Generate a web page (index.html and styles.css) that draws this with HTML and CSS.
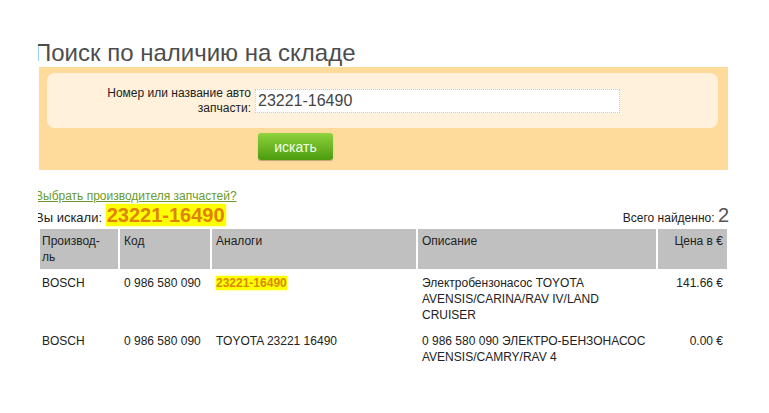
FILE: index.html
```html
<!DOCTYPE html>
<html lang="ru">
<head>
    <meta charset="UTF-8">
    <meta name="viewport" content="width=device-width, initial-scale=1.0">
    <title>Поиск по наличию на складе</title>
    <link rel="stylesheet" href="styles.css">
</head>
<body>
    <div class="page">
        <h1>Поиск по наличию на складе</h1>

        <form class="search">
            <div class="search-row">
                <label for="query">Номер или название авто запчасти:</label>
                <input type="text" id="query" name="query" value="23221-16490">
            </div>
            <button type="button">искать</button>
        </form>

        <a class="brands" href="#">Выбрать производителя запчастей?</a>

        <div class="summary">
            <span class="searched">Вы искали: <span class="hl hl-big">23221-16490</span></span>
            <span class="found">Всего найденно: <span class="count">2</span></span>
        </div>

        <table class="results">
            <colgroup>
                <col class="c-brand">
                <col class="c-code">
                <col class="c-analog">
                <col class="c-desc">
                <col class="c-price">
            </colgroup>
            <thead>
                <tr>
                    <th>Производ-<br>ль</th>
                    <th>Код</th>
                    <th>Аналоги</th>
                    <th>Описание</th>
                    <th class="price">Цена в €</th>
                </tr>
            </thead>
            <tbody>
                <tr>
                    <td>BOSCH</td>
                    <td>0 986 580 090</td>
                    <td><span class="hl hl-small">23221-16490</span></td>
                    <td>Электробензонасос TOYOTA <span class="nowrap">AVENSIS/CARINA/RAV IV/LAND</span> CRUISER</td>
                    <td class="price">141.66 €</td>
                </tr>
                <tr>
                    <td>BOSCH</td>
                    <td>0 986 580 090</td>
                    <td>TOYOTA 23221 16490</td>
                    <td>0 986 580 090 ЭЛЕКТРО-БЕНЗОНАСОС <span class="nowrap">AVENSIS/CAMRY/RAV 4</span></td>
                    <td class="price">0.00 €</td>
                </tr>
            </tbody>
        </table>
    </div>
</body>
</html>
```

FILE: styles.css
```css
body {
    margin: 0;
    padding: 0;
    background-color: #fff;
    color: #222;
    font-family: "Liberation Sans", Arial, sans-serif;
    font-size: 12px;
}
.page {
    width: 691px;
    margin-left: 38px;
    overflow: hidden;
}
h1 {
    margin: 39px 0 0 -4px;
    font-size: 24px;
    font-weight: normal;
    line-height: 28px;
    color: #4d4d4d;
}
.search {
    margin: 0 1px;
    padding: 6px 10px 10px 8px;
    background-color: #fedb9b;
}
.search-row {
    display: flex;
    align-items: center;
    height: 55px;
    padding-left: 54px;
    background-color: #fff1db;
    border-radius: 8px;
}
.search-row label {
    width: 150px;
    margin-right: 4px;
    text-align: right;
    line-height: 15px;
    color: #222;
}
.search-row input {
    box-sizing: border-box;
    width: 365px;
    height: 24px;
    padding: 0 2px;
    border: 1px dotted #c8c8c8;
    background-color: #fff;
    font-family: "Liberation Sans", Arial, sans-serif;
    font-size: 16px;
    color: #444;
}
.search button {
    display: block;
    width: 75px;
    height: 27px;
    margin: 5px 0 0 211px;
    padding: 0;
    border: none;
    border-radius: 3px;
    background: linear-gradient(#8fd23e, #4c9c0e);
    box-shadow: 0 1px 1px rgba(0, 0, 0, 0.25);
    color: #f2ffe6;
    font-family: "Liberation Sans", Arial, sans-serif;
    font-size: 14px;
    cursor: pointer;
}
.brands {
    display: block;
    margin: 19px 0 0 -3px;
    line-height: 14px;
    color: #6a9a2a;
}
.summary {
    display: flex;
    justify-content: space-between;
    align-items: baseline;
    margin-left: -3px;
    height: 24px;
    line-height: 24px;
    font-size: 13px;
}
.found {
    font-size: 12px;
}
.count {
    font-size: 20px;
    color: #555;
}
.hl {
    background-color: #ffff00;
    color: #e0820a;
    font-weight: bold;
    box-shadow: 0 0 2px #ffff40;
}
.hl-big {
    padding: 0 1px;
    font-size: 20px;
}
.hl-small {
    color: #d98a00;
}
.results {
    width: 100%;
    border-collapse: separate;
    border-spacing: 2px;
    table-layout: fixed;
}
.c-brand { width: 78px; }
.c-code { width: 90px; }
.c-analog { width: 204px; }
.c-desc { width: 238px; }
.c-price { width: 69px; }
.results th,
.results td {
    padding: 4px 4px;
    vertical-align: top;
    text-align: left;
    line-height: 16px;
    font-weight: normal;
}
.results th {
    background-color: #c0c0c0;
}
.results th:first-child,
.results td:first-child {
    padding-left: 2px;
}
.results .price {
    text-align: right;
}
.nowrap {
    white-space: nowrap;
}
```
